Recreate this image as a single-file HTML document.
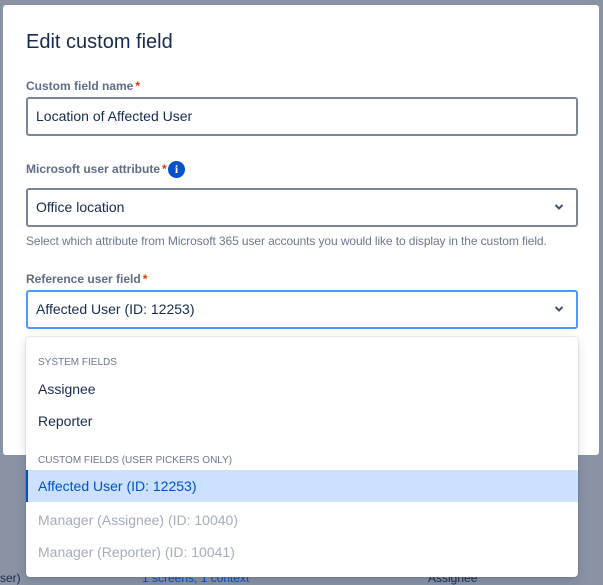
<!DOCTYPE html>
<html><head><style>
*{box-sizing:border-box;margin:0;padding:0}
body{width:603px;height:578px;overflow:hidden;background:#8993a4;font-family:"Liberation Sans",sans-serif;position:relative;color:#172b4d}
.modal{position:absolute;left:3px;top:5px;width:596px;height:450px;background:#fff;border-radius:3px}
.abs{position:absolute}
h1{position:absolute;left:26px;top:31px;font-size:20px;font-weight:400;color:#172b4d}
.lbl{position:absolute;left:26px;font-size:12px;font-weight:700;color:#5e6c84}
.lbl span{color:#de350b;margin-left:2px}
.inp{position:absolute;left:26px;width:552px;height:39px;border:2px solid #7a869a;border-radius:3px;font-size:14px;padding:0 8px;line-height:35px;color:#172b4d;background:#fff}
.chev{position:absolute;right:12px;top:13px}
.help{position:absolute;left:26px;top:234px;font-size:12px;color:#6b778c;letter-spacing:-0.1px}
.dd{position:absolute;left:26px;top:337px;width:552px;height:240px;background:#fff;border-radius:4px;box-shadow:0 0 0 1px rgba(9,30,66,.08),0 4px 11px rgba(9,30,66,.15)}
.grp{position:absolute;left:12px;font-size:10px;color:#6b778c}
.opt{position:absolute;left:0;width:552px;height:32px;line-height:32px;padding-left:12px;font-size:14px;color:#172b4d}
</style></head><body>
<div class="abs" style="left:0;top:571px;font-size:12px;color:#172b4d">ser)</div>
<div class="abs" style="left:142px;top:571px;font-size:12px;color:#0052cc">1 screens, 1 context</div>
<div class="abs" style="left:428px;top:571px;font-size:12px;color:#172b4d">Assignee</div>
<div class="modal"></div>
<h1>Edit custom field</h1>
<div class="lbl" style="top:79px">Custom field name<span>*</span></div>
<div class="inp" style="top:97px">Location of Affected User</div>
<div class="lbl" style="top:162px">Microsoft user attribute<span>*</span></div>
<div class="abs" style="left:168px;top:161px;width:17px;height:17px;border-radius:50%;background:#0052cc;color:#fff;font-size:12px;font-weight:700;text-align:center;line-height:17px;font-family:'Liberation Serif',serif">i</div>
<div class="inp" style="top:188px">Office location<svg class="chev" width="10" height="8" viewBox="0 0 10 8"><path d="M1.5 2l3.5 3.5L8.5 2" stroke="#42526e" stroke-width="2" fill="none"/></svg></div>
<div class="help">Select which attribute from Microsoft 365 user accounts you would like to display in the custom field.</div>
<div class="lbl" style="top:272px">Reference user field<span>*</span></div>
<div class="inp" style="top:290px;border-color:#4c9aff">Affected User (ID: 12253)<svg class="chev" width="10" height="8" viewBox="0 0 10 8"><path d="M1.5 2l3.5 3.5L8.5 2" stroke="#42526e" stroke-width="2" fill="none"/></svg></div>
<div class="dd">
<div class="grp" style="top:20px">SYSTEM FIELDS</div>
<div class="opt" style="top:36px">Assignee</div>
<div class="opt" style="top:68px">Reporter</div>
<div class="grp" style="top:118px">CUSTOM FIELDS (USER PICKERS ONLY)</div>
<div class="opt" style="top:133px;background:#cce0ff;color:#0052cc;border-left:2px solid #0052cc;padding-left:10px">Affected User (ID: 12253)</div>
<div class="opt" style="top:167px;color:#a5adba">Manager (Assignee) (ID: 10040)</div>
<div class="opt" style="top:199px;color:#a5adba">Manager (Reporter) (ID: 10041)</div>
</div>
</body></html>
